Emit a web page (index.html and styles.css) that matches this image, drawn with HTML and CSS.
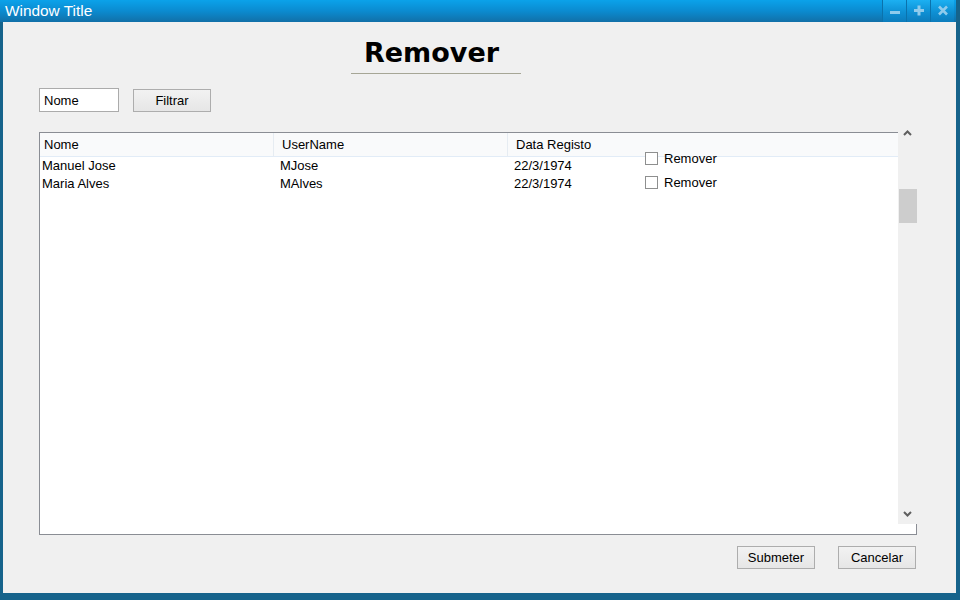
FILE: index.html
```html
<!DOCTYPE html>
<html>
<head>
<meta charset="utf-8">
<title>Remover</title>
<link rel="stylesheet" href="styles.css">
</head>
<body>
<div class="window">
  <div class="titlebar">
    <span class="title">Window Title</span>
    <div class="controls">
      <div class="ctl"><svg width="12" height="12" viewBox="0 0 12 12"><rect x="1" y="6" width="10" height="3" fill="#8fcbec"/></svg></div>
      <div class="ctl"><svg width="12" height="12" viewBox="0 0 12 12"><rect x="1" y="4" width="10" height="3" fill="#8fcbec"/><rect x="4.5" y="0.5" width="3" height="10" fill="#8fcbec"/></svg></div>
      <div class="ctl"><svg width="12" height="12" viewBox="0 0 12 12"><path d="M2 1.5 L10 9.5 M10 1.5 L2 9.5" stroke="#8fcbec" stroke-width="2.6"/></svg></div>
    </div>
  </div>
  <div class="frame">
    <div class="heading"><h1>Remover</h1></div>
    <div class="filter">
      <div class="input">Nome</div>
      <div class="btn">Filtrar</div>
    </div>
    <div class="table">
      <div class="grid">
        <div class="hcell first">Nome</div>
        <div class="hcell">UserName</div>
        <div class="hcell">Data Registo</div>
        <div class="cell first">Manuel Jose</div>
        <div class="cell">MJose</div>
        <div class="cell">22/3/1974</div>
        <div class="cell first">Maria Alves</div>
        <div class="cell">MAlves</div>
        <div class="cell">22/3/1974</div>
      </div>
      <div class="checks">
        <label class="check"><span class="box"></span>Remover</label>
        <label class="check"><span class="box"></span>Remover</label>
      </div>
      <div class="scrollbar">
        <svg class="arrow" width="9" height="6" viewBox="0 0 9 6"><path d="M1 5 L4.5 1.5 L8 5" fill="none" stroke="#5f5f5f" stroke-width="2"/></svg>
        <div class="track"><div class="thumb"></div></div>
        <svg class="arrow" width="9" height="6" viewBox="0 0 9 6"><path d="M1 1 L4.5 4.5 L8 1" fill="none" stroke="#5f5f5f" stroke-width="2"/></svg>
      </div>
    </div>
    <div class="actions">
      <div class="btn">Submeter</div>
      <div class="btn">Cancelar</div>
    </div>
  </div>
</div>
</body>
</html>
```
FILE: styles.css
```css
html, body {
  margin: 0;
  padding: 0;
  background: #16638b;
}
body {
  font-family: "Liberation Sans", Arial, sans-serif;
  font-size: 13px;
  color: #000;
}
.window {
  width: 960px;
  height: 597px;
  display: flex;
  flex-direction: column;
  box-sizing: border-box;
  border-right: 4px solid #16638b;
  background: #16638b;
}
.titlebar {
  height: 22px;
  flex: none;
  display: flex;
  align-items: stretch;
  background: linear-gradient(#0ba2ea, #0b8bd0 50%, #1170a8);
}
.title {
  color: #fff;
  font-size: 15.4px;
  line-height: 22px;
  padding-left: 5px;
  flex: 1;
}
.controls {
  display: flex;
  padding-right: 2px;
}
.ctl {
  width: 23px;
  border-left: 1px solid #0b72ac;
  background: linear-gradient(#1cb0f2, #0e90d4 55%, #0c7cbc);
  display: flex;
  align-items: center;
  justify-content: center;
}
.frame {
  flex: 1;
  background: #f0f0f0;
  margin-left: 3px;
  margin-bottom: 4px;
  padding: 0 39px 0 36px;
}
.heading {
  margin: 15px 0 0 312px;
  width: 170px;
  padding-bottom: 4px;
  border-bottom: 1px solid #a6a696;
}
.heading h1 {
  margin: 0;
  padding-left: 13px;
  font-family: "DejaVu Sans", Verdana, sans-serif;
  font-weight: bold;
  font-size: 27px;
  line-height: 32px;
}
.filter {
  margin-top: 14px;
  display: flex;
  align-items: center;
  gap: 14px;
  height: 24px;
}
.input {
  width: 80px;
  height: 24px;
  box-sizing: border-box;
  border: 1px solid #ababab;
  background: #fff;
  padding-left: 4px;
  line-height: 23px;
}
.btn {
  width: 78px;
  height: 23px;
  box-sizing: border-box;
  border: 1px solid #adadad;
  background: linear-gradient(#f2f2f2, #e6e6e6);
  text-align: center;
  line-height: 21px;
}
.table {
  position: relative;
  margin-top: 20px;
  width: 878px;
  height: 403px;
  box-sizing: border-box;
  border: 1px solid #8a8d94;
  background: #fff;
  padding-right: 18px;
}
.grid {
  display: grid;
  grid-template-columns: 233px 234px 1fr;
  grid-template-rows: 24px;
  grid-auto-rows: 18px;
}
.hcell {
  box-sizing: border-box;
  background: #f9fafb;
  border-bottom: 1px solid #e2ecf7;
  border-left: 1px solid #e6ecf2;
  padding: 1px 0 0 8px;
  line-height: 22px;
}
.hcell.first {
  border-left: none;
  padding-left: 4px;
}
.cell {
  line-height: 18px;
  padding-left: 7px;
}
.cell.first {
  padding-left: 2px;
}
.checks {
  position: absolute;
  left: 605px;
  top: 19px;
  display: flex;
  flex-direction: column;
  gap: 11px;
}
.check {
  display: flex;
  align-items: center;
  gap: 6px;
  height: 13px;
  line-height: 13px;
}
.box {
  width: 13px;
  height: 13px;
  box-sizing: border-box;
  border: 1px solid #8e8f8f;
  background: #fff;
}
.scrollbar {
  position: absolute;
  right: -1px;
  top: -11px;
  width: 19px;
  height: 402px;
  background: #f0f0f0;
  display: flex;
  flex-direction: column;
  align-items: center;
}
.arrow {
  flex: none;
  margin: 8px 0 7px;
}
.track {
  flex: 1;
  width: 100%;
}
.thumb {
  margin-top: 46px;
  height: 34px;
  width: 18px;
  margin-left: 1px;
  background: #cdcdcd;
}
.actions {
  margin-top: 11px;
  padding-right: 1px;
  display: flex;
  justify-content: flex-end;
  gap: 23px;
}
```
